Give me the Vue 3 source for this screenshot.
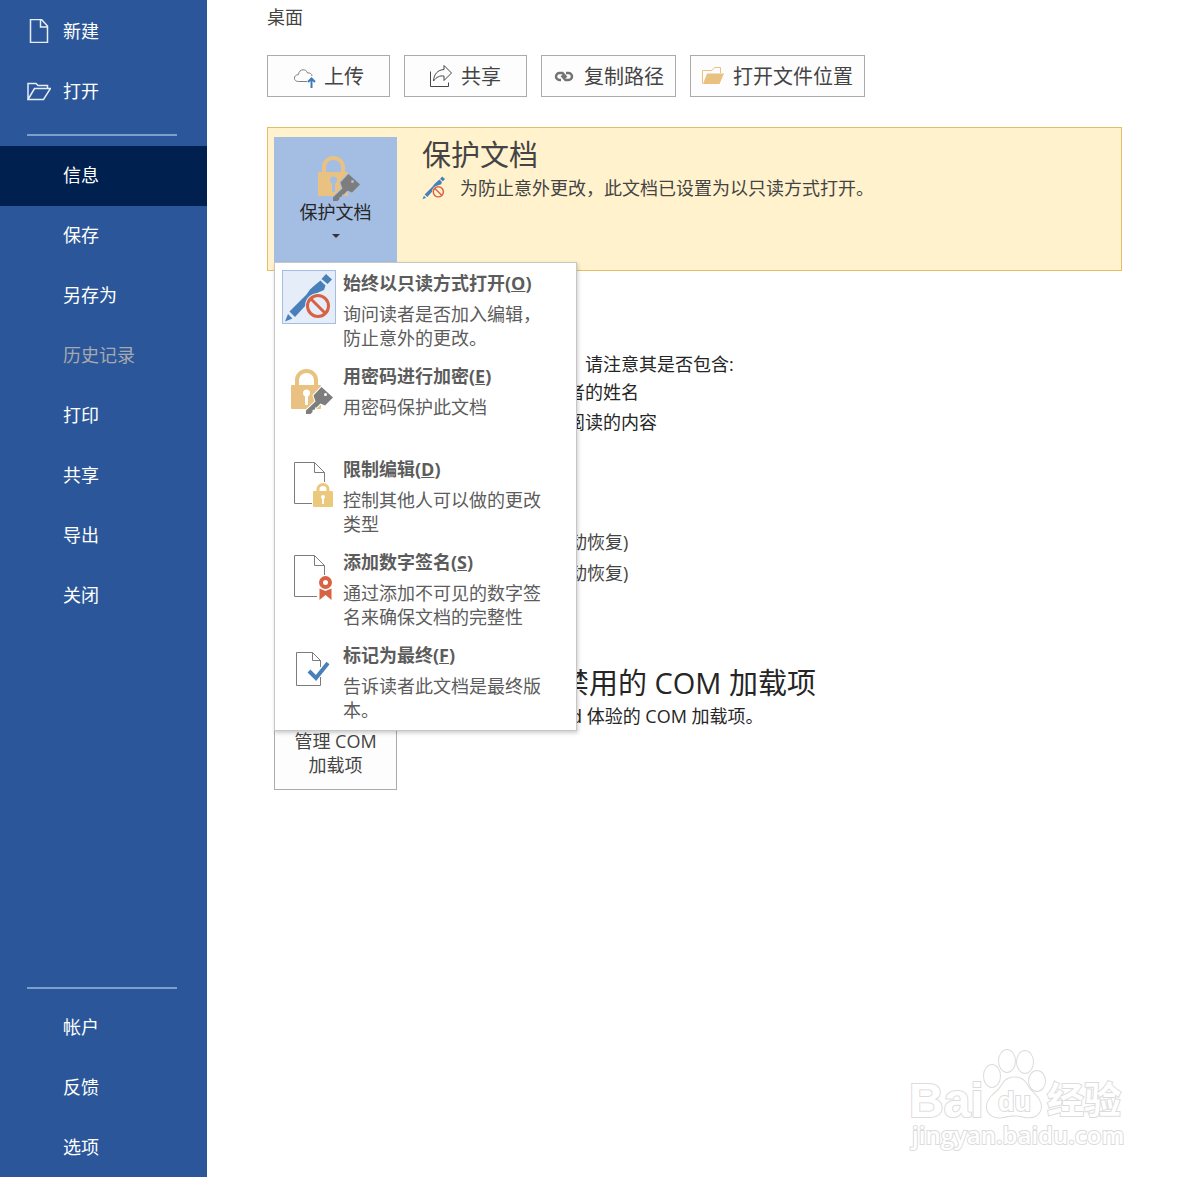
<template>
  <div class="backstage">
    <nav class="sidebar">
      <button
        v-for="item in topItems"
        :key="item.name"
        class="nav-item"
      >
        <svg v-if="item.icon === 'new'" class="nav-icon" viewBox="0 0 24 24">
          <path d="M3.500 .5H14.500L20.500 7V23.500H3.500Z M13.500 .5V8H20.500" />
        </svg>
        <svg v-else class="nav-icon" viewBox="0 0 24 24">
          <path d="M1 20.500V4.500H9L11 6.500H20.500V9.500M1 20.500L7.500 9.500H23.500L16.500 20.500Z" />
        </svg>
        {{ item.name }}
      </button>
      <hr class="divider" />
      <button
        v-for="name in menuItems"
        :key="name"
        class="nav-item plain"
        :class="{ active: name === current }"
        :disabled="name === '历史记录'"
        @click="current = name"
      >
        {{ name }}
      </button>
      <hr class="divider bottom" />
      <button
        v-for="name in bottomItems"
        :key="name"
        class="nav-item plain low"
        :class="{ active: name === current }"
        @click="current = name"
      >
        {{ name }}
      </button>
    </nav>

    <main class="content">
      <p class="location">桌面</p>

      <div class="toolbar">
        <button class="tool-btn">
          <svg class="tool-icon" viewBox="0 0 24 24">
            <path class="cloud" d="M14 16.500H5.500C0 16.500 0 10 5.500 9.500C6 3.500 13.500 3.500 14.500 8C17 7.500 19 9 19 11" />
            <path class="blue-line" d="M18.500 23V13.500M15 17L18.500 13.500L22 17" />
          </svg>
          上传
        </button>
        <button class="tool-btn">
          <svg class="tool-icon" viewBox="0 0 24 24">
            <path class="share" d="M.5 6.500V21.500H18.500V17.500M3.500 16C4 8.500 8 5 14 4.500V.5L21.500 8L14 15.500V11C9.500 10.500 6.500 12 3.500 16Z" />
          </svg>
          共享
        </button>
        <button class="tool-btn">
          <svg class="tool-icon" viewBox="0 0 24 24">
            <path class="chain" d="M8 15H6.500A3.500 3.500 0 0 1 6.500 8H9.500L13.500 12.500M13 8H15.500A3.500 3.500 0 0 1 15.500 15H12.500L8.500 10.500" />
          </svg>
          复制路径
        </button>
        <button class="tool-btn">
          <svg class="tool-icon" viewBox="0 0 24 24">
            <path class="folder-back" d="M.5 18.500V5.500H10L12.500 2.500H18.500V8" />
            <path class="gold" d="M5 8.500H22L17.500 19H1Z" />
          </svg>
          打开文件位置
        </button>
      </div>

      <section class="protect">
        <div class="protect-anchor">
          <button class="protect-btn" @click="menuOpen = !menuOpen">
            <svg class="protect-icon" viewBox="0 0 54 50"><use href="#lock-key" /></svg>
            <span>保护文档</span>
            <svg class="arrow" viewBox="0 0 8 4"><path d="M0 0H8L4 4Z" /></svg>
          </button>

          <div v-show="menuOpen" class="menu">
            <button v-for="entry in protectMenu" :key="entry.key" class="menu-item">
              <svg class="menu-icon" :class="{ selected: entry.key === 'O' }" viewBox="0 0 54 54">
                <use :href="'#' + entry.icon" />
              </svg>
              <span class="menu-text">
                <strong>{{ entry.title }}(<u>{{ entry.key }}</u>)</strong>
                <span class="desc">{{ entry.desc }}</span>
              </span>
            </button>
          </div>
        </div>
        <div class="protect-info">
          <h2>保护文档</h2>
          <p class="status">
            <svg class="status-icon" viewBox="2 3 50 50"><use href="#pen-lock" /></svg>
            为防止意外更改，此文档已设置为以只读方式打开。
          </p>
        </div>
      </section>

      <section class="inspect">
        <p>，请注意其是否包含:</p>
        <ul>
          <li>者的姓名</li>
          <li>阅读的内容</li>
        </ul>
      </section>

      <section class="versions">
        <ul>
          <li>动恢复)</li>
          <li>动恢复)</li>
        </ul>
      </section>

      <section class="addins">
        <button class="com-btn">管理 COM 加载项</button>
        <div class="addins-info">
          <h2>禁用的 COM 加载项</h2>
          <p>d 体验的 COM 加载项。</p>
        </div>
      </section>
    </main>

    <svg class="watermark" viewBox="0 0 224 116">
      <text class="mark logo" x="6" y="75" font-size="48">Bai</text>
      <g class="paw">
        <ellipse cx="89" cy="34" rx="8" ry="11" />
        <ellipse cx="104" cy="19" rx="8" ry="11" />
        <ellipse cx="122" cy="20" rx="8" ry="11" />
        <ellipse cx="134" cy="39" rx="8" ry="10" />
        <path d="M99 43C104 33 119 33 124 43C128 51 138 55 138 65C137 74 130 76 122 75C115 73 107 73 101 75C91 77 83 72 84 63C85 54 95 51 99 43Z" />
      </g>
      <text class="mark logo" x="95" y="69" font-size="27">du</text>
      <text class="mark" x="144" y="72" font-size="37" font-weight="700">经验</text>
      <text class="mark" x="9" y="102" font-size="24" font-weight="600">jingyan.baidu.com</text>
    </svg>

    <svg class="symbols" aria-hidden="true">
      <symbol id="lock-key" overflow="visible">
        <path d="M15 24V17A9.500 9 0 0 1 34 17V24" fill="none" stroke="#e9c282" stroke-width="4" />
        <rect x="9" y="22" width="30" height="24" rx="1" fill="#e9c282" />
        <circle cx="24.500" cy="30" r="3.500" fill="var(--halo)" />
        <path d="M23 31H26V42H23Z" fill="var(--halo)" />
        <path d="M39.500 24L51 34.500L43 42.500L38.500 40.500L34.500 44.500L33 44.500V46.500L30.500 47V49L28.500 51H24V47.500L33.500 38.500L31.500 32.500Z" fill="#7d7d7d" stroke="var(--halo)" stroke-width="2" paint-order="stroke" />
        <circle cx="43.500" cy="31.500" r="1.500" fill="var(--halo)" />
      </symbol>
      <symbol id="pen-lock" overflow="visible">
        <path d="M44 4L50 9.500L45.500 14L39.500 9ZM38.500 10.500L43.500 15.500L42 20L35 23L13 47L7.500 41.500L24.500 24.500L28 19.500L33 15ZM6 44L10.500 48.500L3 51.500Z" fill="#4a80ba" />
        <circle cx="36" cy="36" r="13" fill="var(--halo)" />
        <g fill="none" stroke="#d86344" stroke-width="3">
          <circle cx="36" cy="36" r="10.500" />
          <path d="M28.500 28.500L43.500 43.500" />
        </g>
      </symbol>
      <symbol id="page-lock" overflow="visible">
        <path d="M30 47.500H12.500V6.500H32.500L42.500 16.500V26M32.500 6.500V16.500H42.500" fill="none" stroke="#7c7c7c" />
        <path d="M36 36V33A5 4.500 0 0 1 46 33V36" fill="none" stroke="#ecc87c" stroke-width="3" />
        <rect x="31" y="35" width="20" height="16" rx="1" fill="#ecc87c" />
        <circle cx="41" cy="41" r="2" fill="#fff" />
        <path d="M40 42H42V48H40Z" fill="#fff" />
      </symbol>
      <symbol id="page-sign" overflow="visible">
        <path d="M35 47.500H12.500V6.500H32.500L42.500 16.500V26M32.500 6.500V16.500H42.500" fill="none" stroke="#7c7c7c" />
        <circle cx="43.500" cy="33.500" r="4.500" fill="none" stroke="#d86344" stroke-width="4" />
        <path d="M37.500 39.500L43.500 42L49.500 39.500V51L43.500 46L37.500 51Z" fill="#d86344" />
      </symbol>
      <symbol id="page-check" overflow="visible">
        <path d="M38.500 35V43.500H14.500V10.500H30.500L38.500 18.500V25M30.500 10.500V18.500H38.500" fill="none" stroke="#7c7c7c" />
        <path d="M27 29L34 36L46 21" fill="none" stroke="#4a80ba" stroke-width="4" />
      </symbol>
    </svg>
  </div>
</template>

<script setup>
import { ref } from 'vue'

const current = ref('信息')
const menuOpen = ref(true)

const topItems = [
  { name: '新建', icon: 'new' },
  { name: '打开', icon: 'open' },
]
const menuItems = ['信息', '保存', '另存为', '历史记录', '打印', '共享', '导出', '关闭']
const bottomItems = ['帐户', '反馈', '选项']

const protectMenu = [
  { key: 'O', icon: 'pen-lock', title: '始终以只读方式打开', desc: '询问读者是否加入编辑，防止意外的更改。' },
  { key: 'E', icon: 'lock-key', title: '用密码进行加密', desc: '用密码保护此文档' },
  { key: 'D', icon: 'page-lock', title: '限制编辑', desc: '控制其他人可以做的更改类型' },
  { key: 'S', icon: 'page-sign', title: '添加数字签名', desc: '通过添加不可见的数字签名来确保文档的完整性' },
  { key: 'F', icon: 'page-check', title: '标记为最终', desc: '告诉读者此文档是最终版本。' },
]
</script>

<style>
body {
  margin: 0;
  background: #fff;
}
</style>

<style scoped>
.backstage {
  position: relative;
  display: flex;
  min-height: 100vh;
  font-family: "Open Sans", "Noto Sans CJK SC", sans-serif;
  font-size: 18px;
  line-height: 24px;
  color: #262626;
}

button {
  font: inherit;
  color: inherit;
  margin: 0;
  cursor: pointer;
}

h2,
p,
ul {
  margin: 0;
  padding: 0;
  font-weight: 400;
  list-style: none;
}

h2 {
  font-size: 29px;
  line-height: 40px;
}

.sidebar {
  flex: 0 0 207px;
  display: flex;
  flex-direction: column;
  box-sizing: border-box;
  padding-top: 2px;
  background: #2b579a;
}

.nav-item {
  display: flex;
  align-items: center;
  gap: 12px;
  height: 60px;
  padding: 0 0 2px 27px;
  border: none;
  background: none;
  color: #fff;
  text-align: left;
}

.nav-item.plain {
  padding-left: 63px;
}

.nav-item.low {
  padding-bottom: 0;
}

.nav-item.active {
  background: #002050;
}

.nav-item:disabled {
  color: #a6a9ae;
}

.nav-icon {
  width: 24px;
  height: 24px;
  fill: none;
  stroke: #e8edf5;
  stroke-width: 1.5;
}

.divider {
  width: 150px;
  height: 2px;
  margin: 12px 0 10px 27px;
  border: none;
  background: #7f9fc8;
}

.divider.bottom {
  margin-top: auto;
  margin-bottom: 8px;
}

.content {
  flex: 1;
  min-width: 0;
  padding: 5px 65px 40px 60px;
}

.location {
  color: #444;
}

.toolbar {
  display: flex;
  gap: 14px;
  margin-top: 26px;
}

.tool-btn {
  display: flex;
  align-items: center;
  justify-content: center;
  gap: 7px;
  box-sizing: border-box;
  min-width: 123px;
  height: 42px;
  padding: 2px 11px 0;
  border: 1px solid #ababab;
  background: #fdfdfd;
  color: #444;
  font-size: 20px;
  white-space: nowrap;
}

.tool-icon {
  width: 24px;
  height: 24px;
  fill: none;
}

.cloud {
  stroke: #808080;
}

.blue-line {
  stroke: #3f7ab8;
  stroke-width: 2;
}

.share {
  stroke: #444;
}

.chain {
  stroke: #737373;
  stroke-width: 2.5;
}

.folder-back {
  stroke: #e9c282;
}

.gold {
  fill: #e9c282;
}

.protect {
  display: flex;
  gap: 25px;
  box-sizing: border-box;
  height: 144px;
  margin-top: 30px;
  padding: 9px 6px 0;
  border: 1px solid #e8bd68;
  background: #fff2cd;
}

.protect-anchor {
  position: relative;
  flex: 0 0 123px;
}

.protect-btn {
  display: flex;
  flex-direction: column;
  align-items: center;
  width: 100%;
  height: 126px;
  padding: 13px 0 0;
  border: none;
  background: #a4bde3;
}

.protect-icon {
  --halo: #a4bde3;
  width: 54px;
  height: 50px;
  overflow: visible;
}

.arrow {
  width: 8px;
  height: 4px;
  margin-top: 10px;
  fill: #333;
}

.menu {
  position: absolute;
  top: 125px;
  left: 0;
  z-index: 1;
  box-sizing: border-box;
  width: 303px;
  padding: 2px 0 0;
  border: 1px solid #c6c6c6;
  background: #fff;
  box-shadow: 1px 2px 4px rgba(0, 0, 0, 0.2);
}

.menu-item {
  display: flex;
  align-items: flex-start;
  gap: 7px;
  box-sizing: border-box;
  width: 100%;
  height: 93px;
  padding: 5px 30px 0 7px;
  border: none;
  background: none;
  color: #5c5c5c;
  text-align: left;
}

.menu-icon {
  --halo: #fff;
  flex: none;
  width: 54px;
  height: 54px;
}

.menu-icon.selected {
  --halo: #e5edf9;
  background: #e5edf9;
  outline: 1px solid #a4bde3;
  outline-offset: -1px;
}

.menu-text {
  display: flex;
  flex-direction: column;
  gap: 7px;
  padding-top: 1px;
}

.desc {
  width: 200px;
}

.protect-info {
  color: #444;
}

.protect-info h2 {
  line-height: 36px;
}

.status {
  display: flex;
  align-items: center;
  gap: 14px;
  line-height: 30px;
}

.status-icon {
  --halo: #fff2cd;
  width: 24px;
  height: 24px;
}

.inspect {
  margin-top: 80px;
  padding-left: 300px;
  line-height: 26px;
}

.inspect li {
  line-height: 30px;
}

.versions {
  margin-top: 90px;
  padding-left: 302px;
  line-height: 31px;
  color: #444;
}

.addins {
  display: flex;
  gap: 163px;
  margin-top: 74px;
  padding-left: 7px;
}

.com-btn {
  flex: 0 0 123px;
  box-sizing: border-box;
  height: 127px;
  padding: 53px 14px 0;
  border: 1px solid #ababab;
  background: #fdfdfd;
  color: #444;
}

.addins-info p {
  padding-left: 11px;
  line-height: 26px;
}

.watermark {
  position: absolute;
  right: 60px;
  bottom: 19px;
  width: 224px;
  height: 116px;
}

.mark,
.paw {
  fill: #fff;
  stroke: #dcdcdc;
  stroke-width: 2;
  paint-order: stroke;
}

.logo {
  font-family: "Liberation Sans", sans-serif;
  font-weight: 700;
}

.symbols {
  position: absolute;
  width: 0;
  height: 0;
}
</style>
